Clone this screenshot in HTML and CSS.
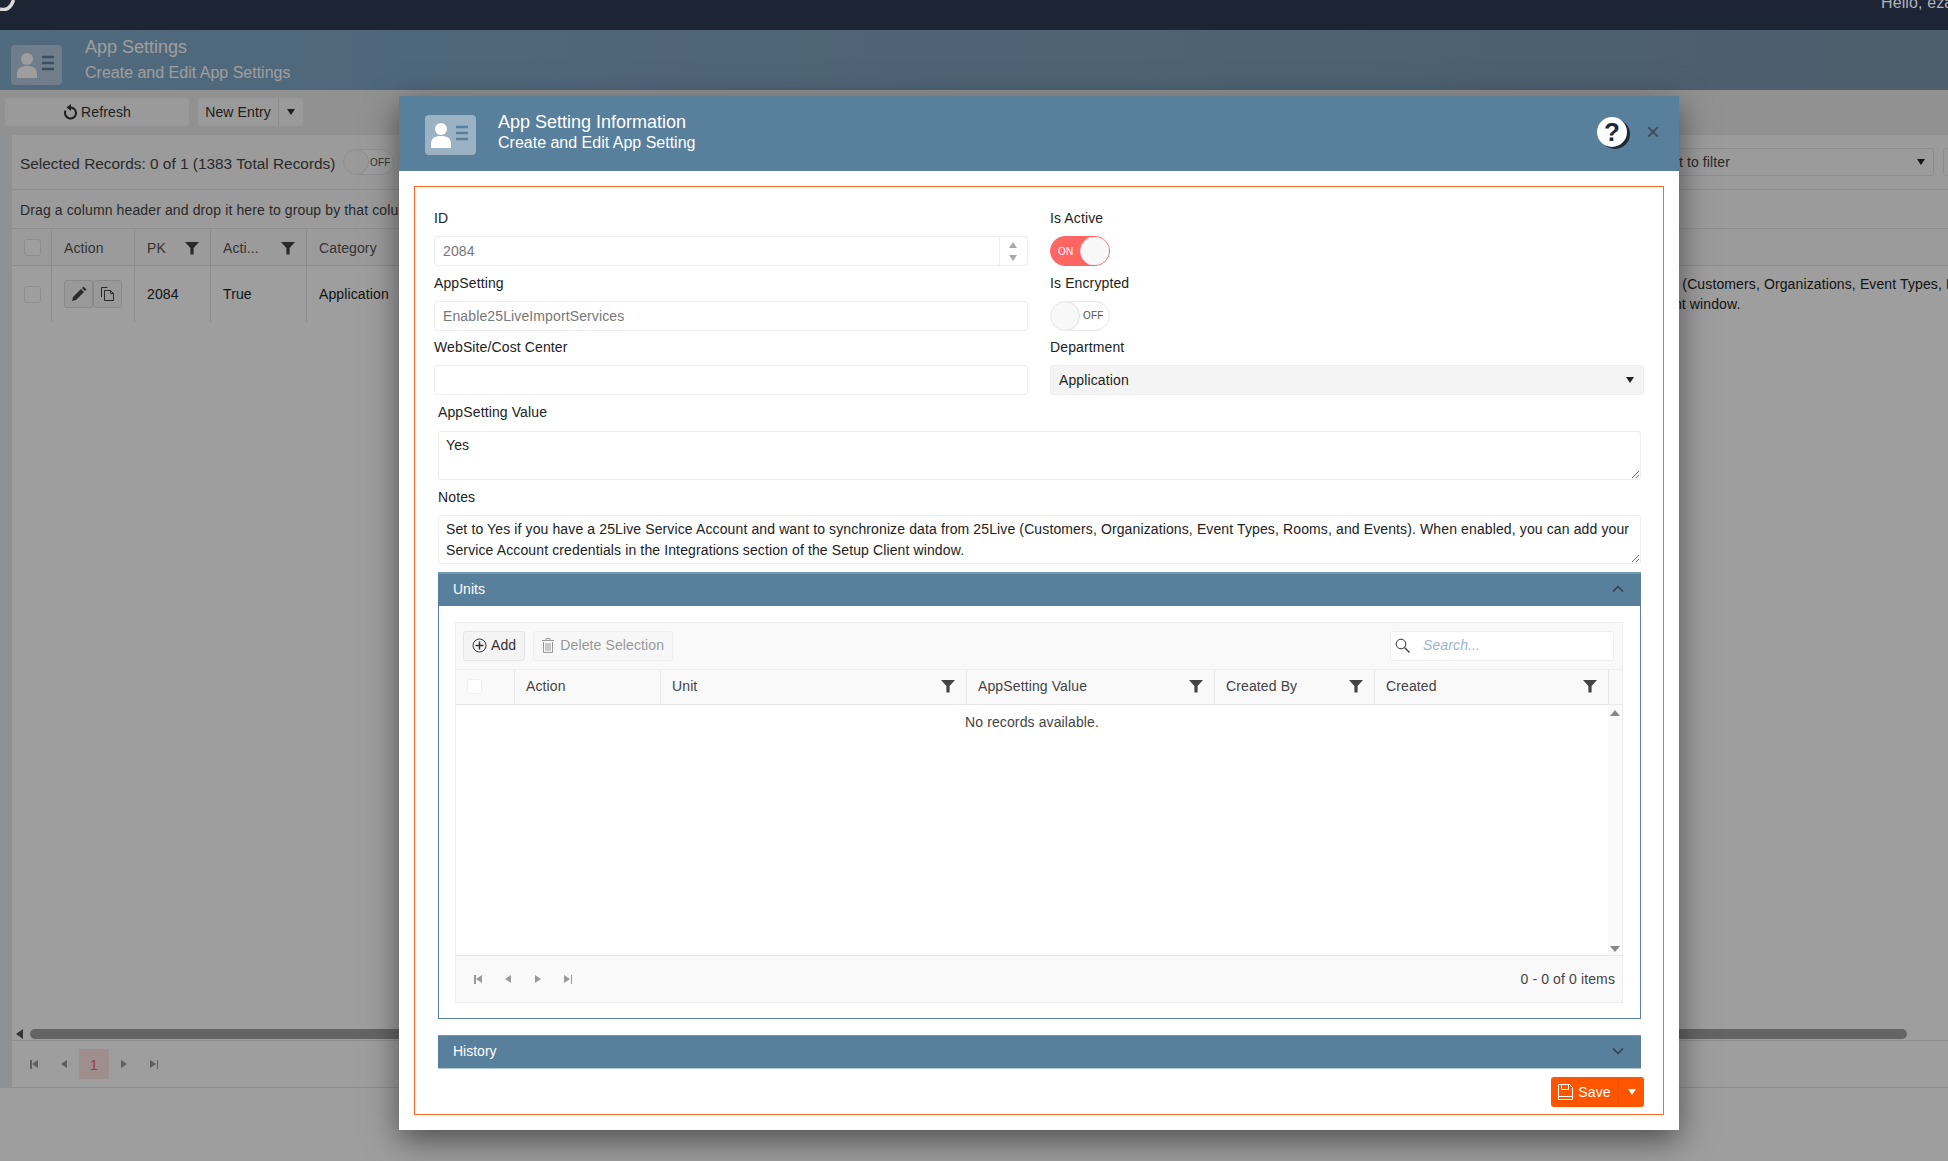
FILE: index.html
```html
<!DOCTYPE html>
<html lang="en">
<head>
  <meta charset="UTF-8">
  <title>App Settings</title>
  <link rel="stylesheet" href="styles.css">
</head>
<body>
  <svg class="defs" width="0" height="0">
    <symbol id="card" viewBox="0 0 51 40">
      <rect class="card-bg" width="51" height="40" rx="4"/>
      <circle class="card-person" cx="16" cy="14" r="6"/>
      <path class="card-person" d="M6 33v-4c0-6 4-8 10-8s10 2 10 8v4z"/>
      <path class="card-lines" d="M31 12h12M31 18h12M31 24h12"/>
    </symbol>
    <symbol id="funnel" viewBox="0 0 14 14">
      <path d="M0 1h14L8.600 7v6.500H5.400V7z"/>
    </symbol>
  </svg>

  <div class="topbar">
    <svg class="logo" width="16" height="11" viewBox="0 0 16 11"><path d="M0 9C6 11 11 8 13.500 0" fill="none" stroke="#d8dadc" stroke-width="3.500"/></svg>
    <span class="hello">Hello, eza</span>
  </div>

  <div class="page-head">
    <svg class="head-icon"><use href="#card"/></svg>
    <div>
      <div class="page-title">App Settings</div>
      <div class="page-sub">Create and Edit App Settings</div>
    </div>
  </div>

  <div class="page-body">
    <div class="toolbar">
      <button class="tbtn refresh">
        <svg width="15" height="16" viewBox="0 0 15 16"><path d="M7.500 3.500a5.500 5.500 0 1 1-5 3.200" fill="none" stroke="#333" stroke-width="2"/><path d="M8 0v7L3.500 3.500z" fill="#333"/></svg>
        Refresh
      </button>
      <div class="tsplit">
        <span class="tsplit-main">New Entry</span>
        <span class="tsplit-arrow"><i class="tri-down"></i></span>
      </div>
    </div>

    <div class="grid-card">
      <div class="records-bar">
        <span class="records-text">Selected Records: 0 of 1 (1383 Total Records)</span>
        <span class="switch switch-small"><i class="knob"></i><em>OFF</em></span>
        <div class="filter-select">Select a Department to filter<i class="tri-down dark"></i></div>
        <div class="filter-next"></div>
      </div>
      <div class="group-bar">Drag a column header and drop it here to group by that column</div>
      <div class="main-row main-head">
        <div class="cell"><i class="check"></i></div>
        <div class="cell">Action</div>
        <div class="cell">PK<svg class="flt"><use href="#funnel"/></svg></div>
        <div class="cell">Acti...<svg class="flt"><use href="#funnel"/></svg></div>
        <div class="cell">Category</div>
        <div class="cell">AppSetting</div>
        <div class="cell">Notes</div>
      </div>
      <div class="main-row main-data">
        <div class="cell"><i class="check"></i></div>
        <div class="cell">
          <span class="act">
            <svg width="16" height="16" viewBox="0 0 16 16"><path d="M1 15l1-4L10 3l3 3-8 8zM11 2l1.500-1.500 3 3L14 5z" fill="#444"/></svg>
          </span>
          <span class="act">
            <svg width="16" height="16" viewBox="0 0 16 16"><path d="M1.500 11V1.500h6M4.500 14.500V4.500h6l3 3v7zM10.500 4.500v3h3" fill="none" stroke="#444"/></svg>
          </span>
        </div>
        <div class="cell">2084</div>
        <div class="cell">True</div>
        <div class="cell">Application</div>
        <div class="cell">Enable25LiveImportServices</div>
        <div class="cell notes-cell">Set to Yes if you have a 25Live Service Account and want to synchronize data from 25Live (Customers, Organizations, Event Types, Rooms, and Events). When enabled, you can add your Service Account credentials in the Integrations section of the Setup Client window.</div>
      </div>
      <div class="grid-fill"></div>
      <div class="hscroll">
        <i class="tri-left"></i>
        <div class="hscroll-thumb"></div>
      </div>
      <div class="main-pager">
        <span class="pg"><i class="first"></i></span>
        <span class="pg"><i class="prev"></i></span>
        <span class="pg pg-current">1</span>
        <span class="pg"><i class="next"></i></span>
        <span class="pg"><i class="last"></i></span>
      </div>
    </div>
  </div>

  <div class="overlay"></div>

  <div class="modal">
    <div class="modal-head">
      <svg class="modal-icon"><use href="#card"/></svg>
      <div class="modal-titles">
        <div class="modal-title">App Setting Information</div>
        <div class="modal-sub">Create and Edit App Setting</div>
      </div>
      <span class="help">?</span>
      <span class="close">&times;</span>
    </div>

    <div class="modal-box">
      <div class="form-grid">
        <div class="field">
          <label>ID</label>
          <div class="num-input">
            <input class="input" value="2084" readonly>
            <span class="spin"><i class="tri-up"></i><i class="tri-down"></i></span>
          </div>
        </div>
        <div class="field">
          <label>Is Active</label>
          <span class="switch switch-on"><em>ON</em><i class="knob"></i></span>
        </div>
        <div class="field">
          <label>AppSetting</label>
          <input class="input" value="Enable25LiveImportServices" readonly>
        </div>
        <div class="field">
          <label>Is Encrypted</label>
          <span class="switch"><i class="knob"></i><em>OFF</em></span>
        </div>
        <div class="field">
          <label>WebSite/Cost Center</label>
          <input class="input" value="">
        </div>
        <div class="field">
          <label>Department</label>
          <div class="select">Application<i class="tri-down dark"></i></div>
        </div>
      </div>

      <div class="wide">
        <label class="value-label">AppSetting Value</label>
        <textarea class="area" readonly>Yes</textarea>
        <label class="notes-label">Notes</label>
        <textarea class="area" readonly>Set to Yes if you have a 25Live Service Account and want to synchronize data from 25Live (Customers, Organizations, Event Types, Rooms, and Events). When enabled, you can add your Service Account credentials in the Integrations section of the Setup Client window.</textarea>

        <div class="panel-head units-head">Units
          <svg class="chev" width="12" height="8" viewBox="0 0 12 8"><path d="M1 6.500l5-5 5 5" fill="none" stroke="#2f3f4c" stroke-width="1.500"/></svg>
        </div>
        <div class="panel-body">
          <div class="sub-grid">
            <div class="sub-toolbar">
              <button class="sbtn sbtn-add">
                <svg width="15" height="15" viewBox="0 0 15 15"><circle cx="7.500" cy="7.500" r="6.500" fill="none" stroke="#333"/><path d="M7.500 3.500v8M3.500 7.500h8" stroke="#333" stroke-width="1.500"/></svg>
                Add
              </button>
              <button class="sbtn sbtn-del">
                <svg width="12" height="15" viewBox="0 0 12 15"><path d="M0 2.500h12M4 2.500V.5h4v2M1.500 4v10.500h9V4M4 5v8M6 5v8M8 5v8" fill="none" stroke="#999"/></svg>
                Delete Selection
              </button>
              <div class="search">
                <svg width="15" height="15" viewBox="0 0 15 15"><circle cx="6" cy="6" r="4.800" fill="none" stroke="#333"/><path d="M9.500 9.500l5 5" stroke="#333" stroke-width="1.300"/></svg>
                <span>Search...</span>
              </div>
            </div>
            <div class="sub-head">
              <div class="cell"><i class="check"></i></div>
              <div class="cell">Action</div>
              <div class="cell">Unit<svg class="flt"><use href="#funnel"/></svg></div>
              <div class="cell">AppSetting Value<svg class="flt"><use href="#funnel"/></svg></div>
              <div class="cell">Created By<svg class="flt"><use href="#funnel"/></svg></div>
              <div class="cell">Created<svg class="flt"><use href="#funnel"/></svg></div>
              <div class="cell"></div>
            </div>
            <div class="sub-content">
              <div class="no-records">No records available.</div>
              <div class="vscroll"><i class="tri-up"></i><i class="tri-down"></i></div>
            </div>
            <div class="sub-pager">
              <span class="pg"><i class="first"></i></span>
              <span class="pg"><i class="prev"></i></span>
              <span class="pg"><i class="next"></i></span>
              <span class="pg"><i class="last"></i></span>
              <span class="items">0 - 0 of 0 items</span>
            </div>
          </div>
        </div>

        <div class="panel-head history-head">History
          <svg class="chev" width="12" height="8" viewBox="0 0 12 8"><path d="M1 1.500l5 5 5-5" fill="none" stroke="#2f3f4c" stroke-width="1.500"/></svg>
        </div>
      </div>

      <div class="save-row">
        <div class="save">
          <span class="save-main">
            <svg width="15" height="16" viewBox="0 0 15 16"><path d="M.5.5h11l3 3v12H.5zM3.500.5v5h7v-5M.5 12.500h14" fill="none" stroke="#fff"/></svg>
            Save
          </span>
          <span class="save-arrow"><i class="tri-down white"></i></span>
        </div>
      </div>
    </div>
  </div>
</body>
</html>
```

FILE: styles.css
```css
* {
  box-sizing: border-box;
}

html, body {
  margin: 0;
  padding: 0;
  height: 100%;
  overflow: hidden;
}

body {
  width: 1948px;
  height: 1161px;
  position: relative;
  font-family: "Liberation Sans", Arial, sans-serif;
  font-size: 14px;
  letter-spacing: 0.12px;
  color: #333;
  background-color: #fff;
}

.defs {
  position: absolute;
}

/* icon parts */
.card-bg { fill: #fff; fill-opacity: 0.4; }
.card-person { fill: #fff; }
.card-lines { stroke: #587f9b; stroke-width: 2.500; fill: none; }

/* little arrows */
.tri-down, .tri-up, .tri-left {
  display: inline-block;
  width: 0;
  height: 0;
  border-left: 4px solid transparent;
  border-right: 4px solid transparent;
}
.tri-down { border-top: 6px solid #888; }
.tri-up { border-bottom: 6px solid #888; }
.tri-down.dark { border-top-color: #222; }
.tri-down.white { border-top-color: #fff; }
.tri-left {
  border: 0;
  border-top: 5px solid transparent;
  border-bottom: 5px solid transparent;
  border-right: 7px solid #555;
}

/* page behind the modal */
.topbar {
  height: 30px;
  background-color: #303b55;
  display: flex;
  justify-content: space-between;
  align-items: flex-start;
  overflow: hidden;
}

/* these two stay bright over the dimmed page */
.logo, .hello {
  position: relative;
  z-index: 1;
}

.hello {
  color: #b0b3ba;
  font-size: 16px;
  line-height: 18px;
  margin-top: -6px;
  width: 67px;
  white-space: nowrap;
  overflow: hidden;
}

.page-head {
  height: 60px;
  background: linear-gradient(to right, #82abcb, #7c98b0);
  display: flex;
  align-items: center;
  padding-left: 11px;
  color: #fff;
  letter-spacing: 0;
}

.head-icon {
  width: 51px;
  height: 40px;
  margin-right: 23px;
  margin-top: 10px;
}

.page-title {
  font-size: 18px;
  line-height: 22px;
  margin-top: -2px;
}

.page-sub {
  font-size: 16px;
  line-height: 20px;
  margin-top: 5px;
}

.page-body {
  height: 998px;
  background-color: #ebebeb;
  display: flex;
  flex-direction: column;
  padding-left: 0;
}

.toolbar {
  height: 45px;
  display: flex;
  padding: 8px 0 0 5px;
  gap: 9px;
}

.tbtn, .tsplit {
  height: 28px;
  background-color: #f8f8f8;
  border: 0;
  border-radius: 3px;
  font: 14px "Liberation Sans", Arial, sans-serif;
  letter-spacing: inherit;
  color: #333;
}

.refresh {
  width: 184px;
  display: flex;
  align-items: center;
  justify-content: center;
  gap: 3px;
}

.tsplit {
  width: 105px;
  display: flex;
}

.tsplit-main {
  width: 81px;
  line-height: 28px;
  text-align: center;
  border-right: 1px solid #e4e4e4;
}

.tsplit-arrow {
  flex: 1;
  display: flex;
  align-items: center;
  justify-content: center;
}

.tsplit-arrow .tri-down {
  border-top-color: #333;
}

.grid-card {
  flex: 1;
  margin-left: 12px;
  background-color: #fff;
  display: flex;
  flex-direction: column;
  width: 1936px;
  box-shadow: -12px 0 0 #e6eaef;
}

.records-bar {
  height: 55px;
  background-color: #fafafa;
  border-bottom: 1px solid #e4e4e4;
  display: flex;
  align-items: center;
  padding-left: 8px;
}

.records-text {
  font-size: 15.400px;
  letter-spacing: 0;
  color: #444;
  width: 323px;
  flex-shrink: 0;
  white-space: nowrap;
  padding-top: 3px;
}

.switch {
  position: relative;
  display: flex;
  align-items: center;
  width: 60px;
  height: 30px;
  border: 1px solid #e8e8e8;
  border-radius: 15px;
  background-color: #fff;
  color: #555;
  font-size: 10px;
  overflow: hidden;
  flex-shrink: 0;
}

.switch em {
  font-style: normal;
  margin-left: 3px;
}

.switch .knob {
  display: block;
  width: 30px;
  height: 30px;
  margin: -1px 0 -1px -1px;
  border: 1px solid #e2e2e2;
  border-radius: 50%;
  background-color: #f8f8f8;
  flex-shrink: 0;
}

.switch-small {
  width: 51px;
  height: 26px;
  border-radius: 13px;
}

.switch-small em {
  margin-left: 1px;
}

.switch-small .knob {
  width: 26px;
  height: 26px;
}

.switch-on {
  background-color: #ff6663;
  border-color: #ff6663;
  color: #fff;
  justify-content: space-between;
}

.switch-on em {
  margin-left: 7px;
}

.switch-on .knob {
  margin: -1px -1px -1px 0;
}

.filter-select {
  width: 386px;
  height: 28px;
  margin-left: auto;
  flex-shrink: 0;
  display: flex;
  justify-content: space-between;
  align-items: center;
  padding: 0 8px 0 4px;
  background-color: #fafafa;
  border: 1px solid #e4e4e4;
  border-radius: 3px;
  color: #444;
}

.filter-next {
  width: 30px;
  height: 28px;
  flex-shrink: 0;
  margin-left: 9px;
  margin-right: -25px;
  border: 1px solid #e4e4e4;
  border-radius: 3px;
}

.group-bar {
  height: 39px;
  line-height: 40px;
  padding-left: 8px;
  background-color: #fafafa;
  border-bottom: 1px solid #e4e4e4;
  color: #444;
  white-space: nowrap;
}

.main-row {
  display: grid;
  grid-template-columns: 40px 83px 76px 96px 120px 670px 1109px;
}

.main-head {
  height: 37px;
  background-color: #fafafa;
  border-bottom: 1px solid #e4e4e4;
  color: #555;
}

.main-head .cell {
  padding-top: 1px;
  padding-right: 11px;
}

.main-data {
  height: 56px;
}

.cell {
  display: flex;
  align-items: center;
  justify-content: space-between;
  padding: 0 12px;
  border-right: 1px solid #e4e4e4;
  min-width: 0;
  white-space: nowrap;
}

.cell:first-child {
  padding: 0 0 0 12px;
}

.flt {
  width: 14px;
  height: 14px;
  fill: #444;
  flex-shrink: 0;
}

.check {
  display: block;
  width: 17px;
  height: 17px;
  background-color: #fff;
  border: 1px solid #e4e4e4;
  border-radius: 3px;
}

.main-data .cell:nth-child(2) {
  justify-content: flex-start;
}

.act {
  width: 30px;
  height: 28px;
  display: flex;
  align-items: center;
  justify-content: center;
  background-color: #f7f7f7;
  border: 1px solid #ddd;
  border-radius: 3px;
}

.main-data .cell {
  color: #222;
}

.notes-cell {
  white-space: normal;
  line-height: 20px;
  color: #333;
  border-right: 0;
  display: block;
  padding-top: 8px;
}

.grid-fill {
  flex: 1;
}

.hscroll {
  height: 16px;
  display: flex;
  align-items: flex-start;
  padding-left: 4px;
  padding-top: 4px;
  border-bottom: 1px solid #e4e4e4;
}

.hscroll .tri-left {
  margin-right: 7px;
}

.hscroll-thumb {
  width: 1877px;
  height: 10px;
  background-color: #a2a2a2;
  border-radius: 5px;
}

.main-pager {
  height: 47px;
  display: flex;
  align-items: center;
  padding-left: 7px;
  border-bottom: 1px solid #e4e4e4;
  background-color: #fff;
}

.pg {
  width: 30px;
  height: 30px;
  display: flex;
  align-items: center;
  justify-content: center;
  position: relative;
}

.pg-current {
  background-color: #ffe6e4;
  color: #ff6663;
  font-size: 15px;
}

.pg i {
  display: block;
  width: 0;
  height: 0;
  border-top: 4.500px solid transparent;
  border-bottom: 4.500px solid transparent;
}

.pg .prev, .pg .first {
  border-right: 6px solid #999;
}

.pg .next, .pg .last {
  border-left: 6px solid #999;
}

.pg .first {
  margin-left: 2px;
}

.pg .last {
  margin-right: 2px;
}

.pg .first::before, .pg .last::before {
  content: "";
  position: absolute;
  top: 10.500px;
  width: 1.500px;
  height: 9px;
  background-color: #999;
}

.pg .first::before { left: 11px; }
.pg .last::before { right: 11px; }

.overlay {
  position: absolute;
  top: 0;
  left: 0;
  width: 100%;
  height: 100%;
  background-color: rgba(0, 0, 0, 0.38);
}

/* modal */
.modal {
  position: absolute;
  z-index: 2;
  left: 399px;
  top: 96px;
  width: 1280px;
  height: 1034px;
  background-color: #fff;
  box-shadow: 0 10px 30px rgba(0, 0, 0, 0.5);
}

.modal-head {
  height: 75px;
  background-color: #587f9b;
  color: #fff;
  display: flex;
  align-items: center;
  padding-left: 26px;
  letter-spacing: 0;
}

.modal-icon {
  width: 51px;
  height: 40px;
  margin-top: 2px;
}

.modal-titles {
  margin-left: 22px;
  flex: 1;
  margin-top: -4px;
}

.modal-title {
  font-size: 18px;
  line-height: 21px;
}

.modal-sub {
  font-size: 16px;
  line-height: 19px;
}

.help {
  width: 30px;
  height: 30px;
  border-radius: 50%;
  background-color: #fff;
  color: #1c2a38;
  font-weight: bold;
  font-size: 26px;
  line-height: 30px;
  text-align: center;
  box-shadow: 3px 2px 0 #1c2a38;
  margin-top: -3px;
}

.close {
  color: #3f4b55;
  font-size: 24px;
  line-height: 24px;
  width: 14px;
  text-align: center;
  margin-left: 19px;
  margin-right: 19px;
  margin-top: -3px;
}

.modal-box {
  position: relative;
  margin: 15px 15px 0;
  height: 929px;
  border: 1px solid #ff672b;
  padding: 21px 19px 0;
}

.form-grid {
  display: grid;
  grid-template-columns: 594px 594px;
  column-gap: 22px;
  row-gap: 6.500px;
}

.field label, .wide label {
  display: block;
  height: 20px;
  line-height: 20px;
  color: #222;
}

.field label {
  margin-bottom: 8px;
}

.input {
  display: block;
  width: 100%;
  height: 30px;
  padding: 0 8px;
  border: 1px solid #eee;
  border-radius: 3px;
  background-color: #fff;
  color: #777;
  font: 14px "Liberation Sans", Arial, sans-serif;
  letter-spacing: inherit;
  outline: 0;
}

.num-input {
  position: relative;
}

.spin {
  position: absolute;
  top: 0;
  right: 0;
  width: 29px;
  height: 30px;
  border: 1px solid #eee;
  border-radius: 0 3px 3px 0;
  display: flex;
  flex-direction: column;
  align-items: center;
  justify-content: center;
  gap: 7px;
  padding-right: 2px;
}

.spin .tri-up { border-bottom-color: #aaa; }
.spin .tri-down { border-top-color: #aaa; }

.select {
  height: 30px;
  display: flex;
  align-items: center;
  justify-content: space-between;
  padding: 0 9px 0 8px;
  background-color: #f4f4f4;
  border: 1px solid #eee;
  border-radius: 3px;
  color: #222;
}

.wide {
  margin: 7px 3px 0 4px;
}

.value-label {
  margin-bottom: 9px;
}

.notes-label {
  margin: 7px 0 8px;
}

.area {
  display: block;
  width: 100%;
  height: 49px;
  padding: 3px 7px 1px;
  border: 1px solid #eee;
  border-radius: 3px;
  font: 14px/21px "Liberation Sans", Arial, sans-serif;
  letter-spacing: inherit;
  color: #222;
  resize: vertical;
  outline: 0;
  overflow: hidden;
}

.panel-head {
  height: 34px;
  padding: 0 15px 3px;
  background-color: #587f9b;
  border-top: 2px solid #6f9ab4;
  color: #fff;
  font-size: 14px;
  letter-spacing: 0;
  display: flex;
  justify-content: space-between;
  align-items: center;
}

.units-head {
  margin-top: 8px;
}

.history-head {
  margin-top: 16px;
  border-top-width: 1px;
  border-bottom: 1px solid #b4cad8;
}

.chev {
  margin-right: 2px;
}

.panel-body {
  height: 413px;
  padding: 16px 17px 15px 16px;
  border: 1px solid #587f9b;
  border-top: 0;
}

.sub-grid {
  height: 381px;
  border: 1px solid #eee;
  display: flex;
  flex-direction: column;
}

.sub-toolbar {
  height: 46px;
  flex-shrink: 0;
  background-color: #f9f9f9;
  display: flex;
  align-items: center;
  padding: 0 8px 0 7px;
  gap: 8px;
}

.sbtn {
  height: 30px;
  display: flex;
  align-items: center;
  gap: 4px;
  padding: 0 8px 2px;
  background-color: #f4f4f4;
  border: 1px solid #e4e4e4;
  border-radius: 3px;
  font: 14px "Liberation Sans", Arial, sans-serif;
  letter-spacing: inherit;
  color: #333;
}

.sbtn-del {
  color: #999;
  gap: 6px;
  background-color: #f7f7f7;
  border-color: #eee;
}

.search {
  width: 224px;
  height: 30px;
  margin-left: auto;
  display: flex;
  align-items: center;
  gap: 13px;
  padding: 0 0 2px 4px;
  background-color: #fff;
  border: 1px solid #eee;
  border-radius: 3px;
  color: #9db5c6;
  font-style: italic;
}

.sub-head {
  height: 36px;
  flex-shrink: 0;
  display: grid;
  grid-template-columns: 59px 146px 306px 248px 160px 234px 1fr;
  background-color: #f9f9f9;
  border-top: 1px solid #eee;
  border-bottom: 1px solid #e8e8e8;
  color: #444;
}

.sub-head .cell {
  border-right-color: #e8e8e8;
  padding: 0 11px 2px 11px;
}

.sub-head .cell:nth-child(n+5) {
  padding-left: 11px;
}

.sub-head .cell:last-child {
  border-right: 0;
  padding: 0;
}

.sub-head .check {
  width: 15px;
  height: 15px;
  border-color: #f0f0f0;
}

.sub-content {
  flex: 1;
  display: flex;
  min-height: 0;
}

.no-records {
  flex: 1;
  text-align: center;
  padding-top: 8px;
  line-height: 18px;
  color: #444;
}

.vscroll {
  width: 14px;
  background-color: #fafafa;
  display: flex;
  flex-direction: column;
  justify-content: space-between;
  align-items: center;
  padding: 5px 0 3px;
}

.vscroll .tri-up, .vscroll .tri-down {
  border-left-width: 5px;
  border-right-width: 5px;
}

.sub-pager {
  height: 47px;
  flex-shrink: 0;
  display: flex;
  align-items: center;
  padding: 0 7px;
  background-color: #f9f9f9;
  border-top: 1px solid #e8e8e8;
}

.items {
  margin-left: auto;
  color: #444;
}

.save-row {
  display: flex;
  justify-content: flex-end;
  margin-top: 8px;
}

.save {
  width: 93px;
  height: 30px;
  display: flex;
  background-color: #ff5500;
  border-radius: 3px;
  color: #fff;
}

.save-main {
  width: 68px;
  display: flex;
  align-items: center;
  justify-content: center;
  gap: 5px;
  border-right: 1px solid #f05000;
}

.save-arrow {
  flex: 1;
  display: flex;
  align-items: center;
  justify-content: center;
}
```
